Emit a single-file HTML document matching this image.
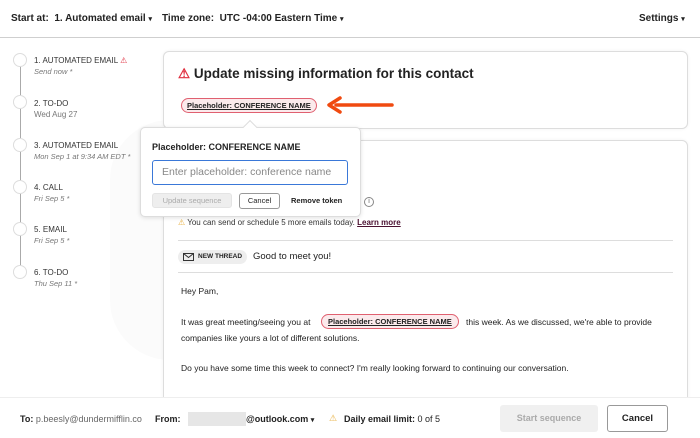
<!DOCTYPE html>
<html><head><meta charset="utf-8"><style>
*{box-sizing:border-box;margin:0;padding:0}
body{width:700px;height:438px;overflow:hidden;background:#fff;font-family:"Liberation Sans",sans-serif;color:#222;position:relative}
.abs{position:absolute}
.hdr{left:0;top:0;width:700px;height:38px;border-bottom:1px solid #cfcfcf;font-size:10px;font-weight:bold;color:#222}
.hdr span{position:absolute;top:13px;white-space:nowrap}
.card{border:1px solid #ddd;border-radius:6px;background:#fff;box-shadow:0 0 3px rgba(0,0,0,.06)}
.step{left:34px;font-size:8px;color:#333;line-height:11px}
.step i{color:#777;font-size:7.5px}
.dot{left:13px;width:14px;height:14px;border-radius:50%;border:1px solid #ddd;background:#fff}
.tok{border:1px solid #e06070;background:#fbeaec;border-radius:9px;font-size:7.5px;font-weight:bold;text-decoration:underline;padding:2px 5px;color:#222;white-space:nowrap}
.body{font-size:8.5px;color:#222;white-space:nowrap}
</style></head><body>
<div class="abs" style="left:110px;top:120px;width:230px;height:240px;border-radius:60px;background:#fbfbfb"></div>
<div class="abs hdr">
<span style="left:11px">Start at:&nbsp; 1. Automated email <span style="position:static;font-size:7px">▾</span></span>
<span style="left:162px">Time zone:&nbsp; UTC -04:00 Eastern Time <span style="position:static;font-size:7px">▾</span></span>
<span style="left:639px">Settings <span style="position:static;font-size:7px">▾</span></span>
</div>
<div class="abs" style="left:20px;top:60px;width:1px;height:214px;background:#aaa"></div>
<div class="abs dot" style="top:53px"></div><div class="abs step" style="top:55px">1. AUTOMATED EMAIL <span style="color:#e03040">⚠</span><br><i>Send now *</i></div>
<div class="abs dot" style="top:95px"></div><div class="abs step" style="top:98px">2. TO-DO<br><span style="color:#777">Wed Aug 27</span></div>
<div class="abs dot" style="top:138px"></div><div class="abs step" style="top:140px">3. AUTOMATED EMAIL<br><i>Mon Sep 1 at 9:34 AM EDT *</i></div>
<div class="abs dot" style="top:180px"></div><div class="abs step" style="top:182px">4. CALL<br><i>Fri Sep 5 *</i></div>
<div class="abs dot" style="top:222px"></div><div class="abs step" style="top:224px">5. EMAIL<br><i>Fri Sep 5 *</i></div>
<div class="abs dot" style="top:265px"></div><div class="abs step" style="top:267px">6. TO-DO<br><i>Thu Sep 11 *</i></div>

<div class="abs card" style="left:163px;top:51px;width:525px;height:78px"></div>
<div class="abs" style="left:178px;top:66px;font-size:13.5px;font-weight:bold"><span style="color:#e03040">⚠</span> Update missing information for this contact</div>
<div class="abs tok" style="left:181px;top:98px">Placeholder: CONFERENCE NAME</div>
<svg class="abs" style="left:326px;top:96px" width="68" height="18"><path d="M66 9H10" stroke="#f04a10" stroke-width="3.5" stroke-linecap="round"/><path d="M14 2L3 9L14 16" stroke="#f04a10" stroke-width="3.5" fill="none" stroke-linecap="round" stroke-linejoin="round"/></svg>

<div class="abs card" style="left:163px;top:140px;width:525px;height:270px"></div>
<div class="abs" style="left:178px;top:218px;font-size:8px;color:#333"><span style="color:#e8b040">⚠</span> You can send or schedule 5 more emails today. <b style="text-decoration:underline;color:#4a1030">Learn more</b></div>
<div class="abs" style="left:364px;top:197px;width:10px;height:10px;border:1px solid #888;border-radius:50%;font-size:7px;text-align:center;line-height:8px;color:#666">i</div>
<div class="abs" style="left:178px;top:240px;width:495px;height:1px;background:#ddd"></div>
<div class="abs" style="left:178px;top:250px;width:69px;height:14px;border-radius:7px;background:#eee;font-size:6.5px;font-weight:bold;line-height:14px;padding-left:20px">NEW THREAD</div>
<svg class="abs" style="left:183px;top:253px" width="11" height="8"><rect x=".5" y=".5" width="10" height="7" fill="none" stroke="#333"/><path d="M.5 .5L5.5 4.5L10.5 .5" fill="none" stroke="#333"/></svg>
<div class="abs" style="left:253px;top:251px;font-size:9.5px">Good to meet you!</div>
<div class="abs" style="left:178px;top:272px;width:495px;height:1px;background:#ddd"></div>
<div class="abs body" style="left:181px;top:286px">Hey Pam,</div>
<div class="abs body" style="left:181px;top:317px">It was great meeting/seeing you at</div>
<div class="abs tok" style="left:321px;top:314px;padding:2px 6px">Placeholder: CONFERENCE NAME</div>
<div class="abs body" style="left:466px;top:317px">this week. As we discussed, we're able to provide</div>
<div class="abs body" style="left:181px;top:333px">companies like yours a lot of different solutions.</div>
<div class="abs body" style="left:181px;top:363px">Do you have some time this week to connect? I'm really looking forward to continuing our conversation.</div>

<div class="abs" style="left:140px;top:127px;width:221px;height:90px;background:#fff;border:1px solid #ddd;border-radius:5px;box-shadow:0 1px 4px rgba(0,0,0,.12)"></div>
<div class="abs" style="left:245px;top:122px;width:10px;height:10px;background:#fff;border-left:1px solid #ddd;border-top:1px solid #ddd;transform:rotate(45deg)"></div>
<div class="abs" style="left:152px;top:142px;font-size:9px;font-weight:bold">Placeholder: CONFERENCE NAME</div>
<div class="abs" style="left:152px;top:160px;width:196px;height:25px;border:1.5px solid #3a78d8;border-radius:3px;font-size:10.5px;color:#888;padding:5px 9px">Enter placeholder: conference name</div>
<div class="abs" style="left:152px;top:193px;width:80px;height:15px;background:#eee;border:1px solid #e4e4e4;border-radius:3px;font-size:7.5px;color:#aaa;text-align:center;line-height:13px">Update sequence</div>
<div class="abs" style="left:239px;top:193px;width:41px;height:16px;border:1px solid #999;border-radius:3px;font-size:7.5px;text-align:center;line-height:14px">Cancel</div>
<div class="abs" style="left:291px;top:196px;font-size:7.5px;font-weight:bold">Remove token</div>

<div class="abs" style="left:0;top:397px;width:700px;height:41px;background:#fff;border-top:1px solid #eee"></div>
<div class="abs" style="left:20px;top:414px;font-size:9px"><b>To:</b> <span style="color:#666">p.beesly@dundermifflin.co</span></div>
<div class="abs" style="left:155px;top:414px;font-size:9px;font-weight:bold">From:</div>
<div class="abs" style="left:188px;top:412px;width:58px;height:14px;background:#e6e6e6"></div>
<div class="abs" style="left:246px;top:414px;font-size:9px;font-weight:bold">@outlook.com <span style="font-size:7px">▾</span></div>
<div class="abs" style="left:329px;top:413px;font-size:9px;color:#e8b040">⚠</div>
<div class="abs" style="left:344px;top:414px;font-size:9px"><b>Daily email limit:</b> 0 of 5</div>
<div class="abs" style="left:500px;top:405px;width:98px;height:27px;background:#f0f0f0;border-radius:3px;font-size:9px;font-weight:bold;color:#aaa;text-align:center;line-height:27px">Start sequence</div>
<div class="abs" style="left:607px;top:405px;width:61px;height:27px;border:1px solid #999;border-radius:3px;font-size:9.5px;font-weight:bold;text-align:center;line-height:25px">Cancel</div>
</body></html>
